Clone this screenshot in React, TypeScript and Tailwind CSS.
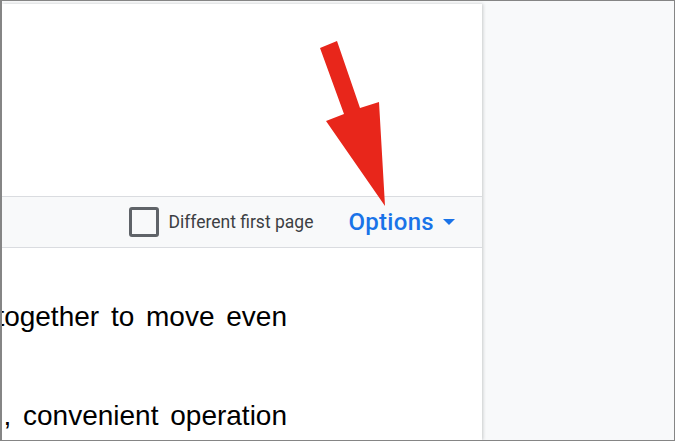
import React from 'react';

const Arrow: React.FC = () => (
  <svg className="absolute left-0 top-0 pointer-events-none" width="675" height="441" viewBox="0 0 675 441">
    <polygon
      points="318,47 335,40 358,107 377,101 383,205 324,120 342,113"
      fill="#e8261b"
    />
  </svg>
);

const App: React.FC = () => {
  return (
    <div className="relative w-[675px] h-[441px] overflow-hidden border border-[#858585] border-l-2 bg-[#f8f9fa] font-['Roboto',sans-serif]">
      <div className="flex h-full pt-[3px]">
        <div className="w-[480px] h-full bg-white flex flex-col shadow-[1px_0_3px_rgba(60,64,67,0.25)] overflow-hidden">
          <div className="h-[193px] shrink-0 border-b border-[#dadce0]"></div>
          <div className="h-[51px] shrink-0 bg-[#f8f9fa] border-b border-[#dadce0] flex items-center justify-end pr-[27px]">
            <div className="w-[30px] h-[30px] rounded-[3px] border-[3px] border-[#5f6368]"></div>
            <span className="ml-[9px] text-[17.5px] text-[#3c4043]">Different first page</span>
            <button type="button" className="ml-[35px] flex items-center text-[24px] font-medium tracking-[0.3px] text-[#1a73e8]">
              Options
              <span className="ml-[9px] w-0 h-0 border-l-[6px] border-r-[6px] border-t-[6px] border-l-transparent border-r-transparent border-t-[#1a73e8]"></span>
            </button>
          </div>
          <div className="relative flex-1 font-['Liberation_Sans',Arial,sans-serif] text-[28px] leading-[36px] text-black">
            <div className="-ml-[100px] w-[385px] text-right whitespace-nowrap mt-[51px] [word-spacing:4px]">
              together to move even
            </div>
            <div className="-ml-[100px] w-[385px] text-right whitespace-nowrap mt-[63px] [word-spacing:4px]">
              , convenient operation
            </div>
          </div>
        </div>
        <div className="flex-1"></div>
      </div>
      <Arrow />
    </div>
  );
};

export default App;
